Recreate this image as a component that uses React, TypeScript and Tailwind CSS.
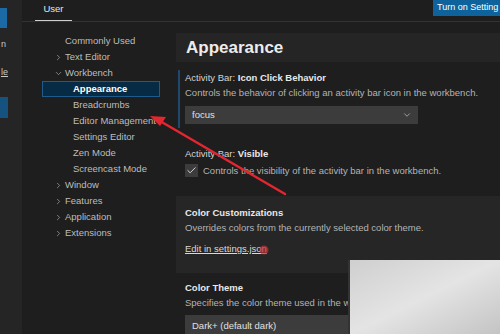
import React from 'react';
import { ChevronRight, ChevronDown, Check } from 'lucide-react';

const font = { fontFamily: '"Liberation Sans", Arial, sans-serif' };

type TreeItem = { label: string; level: 0 | 1; chevron?: 'right' | 'down'; selected?: boolean };

const tree: TreeItem[] = [
    { label: 'Commonly Used', level: 0 },
    { label: 'Text Editor', level: 0, chevron: 'right' },
    { label: 'Workbench', level: 0, chevron: 'down' },
    { label: 'Appearance', level: 1, selected: true },
    { label: 'Breadcrumbs', level: 1 },
    { label: 'Editor Management', level: 1 },
    { label: 'Settings Editor', level: 1 },
    { label: 'Zen Mode', level: 1 },
    { label: 'Screencast Mode', level: 1 },
    { label: 'Window', level: 0, chevron: 'right' },
    { label: 'Features', level: 0, chevron: 'right' },
    { label: 'Application', level: 0, chevron: 'right' },
    { label: 'Extensions', level: 0, chevron: 'right' },
];

const TreeRow: React.FC<{ item: TreeItem }> = ({ item }) => (
    <div
        className={`flex h-[16px] w-[118px] items-center border text-[9.5px] ${
            item.selected ? 'border-[#1c5b8c] bg-[#082b45] font-bold text-white' : 'border-transparent text-[#bdbdbd]'
        }`}
    >
        {item.level === 0 ? (
            <>
                <span className="flex w-[22px] justify-end pr-[2px] text-[#bdbdbd]">
                    {item.chevron === 'right' && <ChevronRight size={9} strokeWidth={1.6} />}
                    {item.chevron === 'down' && <ChevronDown size={9} strokeWidth={1.6} />}
                </span>
                <span>{item.label}</span>
            </>
        ) : (
            <span className="pl-[30px]">{item.label}</span>
        )}
    </div>
);

const Title: React.FC<{ cat: string; name: string }> = ({ cat, name }) => (
    <div className="h-[14px] text-[9.5px] leading-[14px] text-[#d4d4d4]">
        {cat && <span>{cat} </span>}
        <span className="font-bold text-[#e8e8e8]">{name}</span>
    </div>
);

const Desc: React.FC<{ children: React.ReactNode }> = ({ children }) => (
    <div className="h-[15px] text-[9.5px] leading-[15px] whitespace-nowrap text-[#b4b4b4]">{children}</div>
);

export default function App() {
    return (
        <div className="relative flex h-[334px] w-[500px] overflow-hidden bg-[#1e1e1e]" style={font}>
            {/* previous side panel */}
            <div className="flex w-[22px] shrink-0 flex-col bg-[#252526]">
                <div className="mt-[8px] h-[20px] w-[7px] bg-[#1b6aa5]" />
                <div className="mt-[10px] pl-[1px] text-[9px] text-[#c8c8c8]">n</div>
                <div className="mt-[14px] pl-[1px] text-[9px] text-[#c8c8c8] underline">le</div>
                <div className="mt-[18px] h-[21px] w-[8px] bg-[#16527f]" />
            </div>

            <div className="flex min-w-0 flex-1 flex-col">
                {/* header */}
                <div className="relative flex h-[22px] shrink-0 items-start border-b border-[#333333] bg-[#1e1e1e]">
                    <div className="ml-[13px] flex h-[21px] w-[37px] items-start justify-center border-b border-[#cfcfcf] pt-[2px] text-[9.5px] text-[#e6e6e6]">
                        User
                    </div>
                    <div className="ml-auto flex h-[16px] w-[67px] items-center bg-[#0e639c] pl-[4px] text-[9px] whitespace-nowrap text-white">
                        Turn on Setting
                    </div>
                </div>

                <div className="flex flex-1 pt-[11px]">
                    {/* tree */}
                    <div className="w-[154px] shrink-0 pl-[20px]">
                        {tree.map((item) => (
                            <TreeRow key={item.label} item={item} />
                        ))}
                    </div>

                    {/* settings list */}
                    <div className="min-w-0 flex-1">
                        <div className="flex h-[29px] items-center bg-[#252526] pl-[10px] text-[17px] font-bold text-[#ececec]">
                            Appearance
                        </div>

                        <div className="mt-[8px] ml-[2px] w-[322px] border-l-2 border-[#1f4a6e] pt-[1px] pb-[4px] pl-[5px]">
                            <Title cat="Activity Bar:" name="Icon Click Behavior" />
                            <Desc>Controls the behavior of clicking an activity bar icon in the workbench.</Desc>
                            <div className="mt-[6px] flex h-[18px] w-[233px] items-center justify-between bg-[#3c3c3c] pr-[6px] pl-[7px] text-[9.5px] text-[#e0e0e0]">
                                <span>focus</span>
                                <ChevronDown size={10} strokeWidth={1.6} className="text-[#cccccc]" />
                            </div>
                        </div>

                        <div className="mt-[19px] pl-[9px]">
                            <Title cat="Activity Bar:" name="Visible" />
                            <div className="mt-[2px] flex items-center gap-[5px]">
                                <div className="flex h-[13px] w-[13px] items-center justify-center bg-[#3c3c3c]">
                                    <Check size={11} strokeWidth={2} className="text-[#e0e0e0]" />
                                </div>
                                <Desc>Controls the visibility of the activity bar in the workbench.</Desc>
                            </div>
                        </div>

                        <div className="mt-[18px] h-[77px] bg-[#262626] pt-[10px] pl-[9px]">
                            <Title cat="" name="Color Customizations" />
                            <Desc>Overrides colors from the currently selected color theme.</Desc>
                            <div className="mt-[7px] text-[9.5px] text-[#d8d8d8] underline">Edit in settings.json</div>
                        </div>

                        <div className="pt-[8px] pl-[9px]">
                            <Title cat="" name="Color Theme" />
                            <Desc>Specifies the color theme used in the workbench.</Desc>
                            <div className="mt-[5px] flex h-[22px] w-[233px] items-center bg-[#3c3c3c] pl-[7px] text-[9.5px] text-[#e0e0e0]">
                                Dark+ (default dark)
                            </div>
                        </div>
                    </div>
                </div>
            </div>

            {/* red annotation arrow */}
            <svg className="pointer-events-none absolute top-0 left-0" width="500" height="334" viewBox="0 0 500 334">
                <line x1="285" y1="194" x2="160" y2="121" stroke="#e3262f" strokeWidth="2.5" strokeLinecap="round" />
                <polygon points="150,116 166,117 160,126" fill="#e3262f" />
                <circle cx="264" cy="250" r="4.5" fill="#c0303a" opacity="0.7" />
            </svg>

            {/* watermark */}
            <div className="absolute top-[260px] left-[348px] h-[74px] w-[152px] border-l-2 border-[#333] bg-gradient-to-br from-[#cfcfcf] via-[#e4e4e4] to-[#c4c4c4]" />
        </div>
    );
}
